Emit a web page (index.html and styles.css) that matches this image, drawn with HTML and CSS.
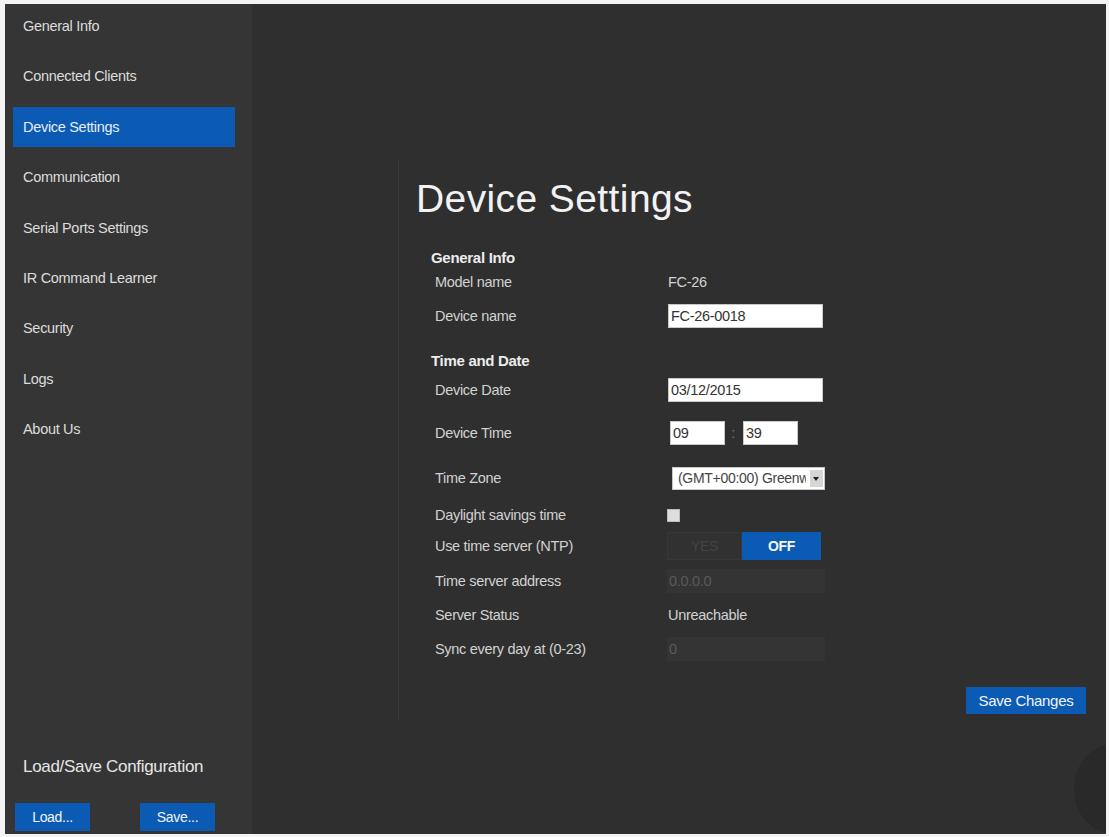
FILE: index.html
```html
<!DOCTYPE html>
<html lang="en">
<head>
    <meta charset="UTF-8">
    <title>Device Settings</title>
    <link rel="stylesheet" href="styles.css">
</head>
<body>
    <div class="app">
        <aside class="sidebar">
            <ul class="nav">
                <li>General Info</li>
                <li>Connected Clients</li>
                <li class="active">Device Settings</li>
                <li>Communication</li>
                <li>Serial Ports Settings</li>
                <li>IR Command Learner</li>
                <li>Security</li>
                <li>Logs</li>
                <li>About Us</li>
            </ul>
            <div class="config">
                <h3>Load/Save Configuration</h3>
                <div class="config-buttons">
                    <button class="btn btn-small">Load...</button>
                    <button class="btn btn-small">Save...</button>
                </div>
            </div>
        </aside>

        <main class="main">
            <section class="panel">
                <h1>Device Settings</h1>

                <div class="form">
                    <div class="row section">General Info</div>
                    <div class="row gap-1">
                        <span class="label">Model name</span>
                        <span class="value">FC-26</span>
                    </div>
                    <div class="row">
                        <span class="label">Device name</span>
                        <input class="field" type="text" value="FC-26-0018">
                    </div>

                    <div class="row section gap-20">Time and Date</div>
                    <div class="row gap-6">
                        <span class="label">Device Date</span>
                        <input class="field" type="text" value="03/12/2015">
                    </div>
                    <div class="row gap-19">
                        <span class="label">Device Time</span>
                        <input class="field field-time" type="text" value="09">
                        <span class="colon">:</span>
                        <input class="field field-time" type="text" value="39">
                    </div>
                    <div class="row gap-21">
                        <span class="label">Time Zone</span>
                        <span class="select">
                            <select>
                                <option>(GMT+00:00) Greenwich Mean Time</option>
                            </select>
                            <span class="select-arrow"></span>
                        </span>
                    </div>
                    <div class="row gap-13">
                        <span class="label">Daylight savings time</span>
                        <span class="checkbox"></span>
                    </div>
                    <div class="row gap-7">
                        <span class="label">Use time server (NTP)</span>
                        <span class="toggle">
                            <span class="toggle-yes">YES</span>
                            <span class="toggle-off">OFF</span>
                        </span>
                    </div>
                    <div class="row gap-11">
                        <span class="label">Time server address</span>
                        <input class="field field-dark" type="text" value="0.0.0.0" disabled>
                    </div>
                    <div class="row">
                        <span class="label">Server Status</span>
                        <span class="value">Unreachable</span>
                    </div>
                    <div class="row">
                        <span class="label">Sync every day at (0-23)</span>
                        <input class="field field-dark" type="text" value="0" disabled>
                    </div>
                </div>

                <div class="panel-footer">
                    <button class="btn btn-save">Save Changes</button>
                </div>
            </section>
            <div class="blob"></div>
        </main>
    </div>
</body>
</html>
```

FILE: styles.css
```css
body {
    margin: 0;
    background: #f4f4f4;
    font-family: "Liberation Sans", Arial, sans-serif;
}
.app {
    display: flex;
    width: 1101px;
    height: 830px;
    margin: 4px 0 0 5px;
    background: #2f2f2f;
    overflow: hidden;
}

/* sidebar */
.sidebar {
    width: 247px;
    background: #353535;
    display: flex;
    flex-direction: column;
}
.nav {
    list-style: none;
    margin: 0;
    padding: 2px 17px 0 8px;
}
.nav li {
    height: 40px;
    line-height: 40px;
    margin-bottom: 10.4px;
    padding-left: 10px;
    font-size: 14.5px;
    color: #dcdcdc;
    letter-spacing: -0.3px;
}
.nav li.active {
    background: #0b5bb4;
    color: #e4ecf7;
}
.config {
    margin-top: auto;
    padding: 0 10px 3px;
}
.config h3 {
    margin: 0 0 26px 8px;
    font-size: 17px;
    line-height: 20px;
    font-weight: normal;
    color: #e6e6e6;
    letter-spacing: -0.3px;
}
.config-buttons {
    display: flex;
    gap: 50px;
}
.btn {
    background: #0b5bb4;
    color: #f0f4fa;
    border: none;
    font-family: inherit;
    cursor: pointer;
}
.btn-small {
    width: 75px;
    height: 28px;
    font-size: 14px;
    letter-spacing: -0.3px;
}

/* main */
.main {
    flex: 1;
    position: relative;
    padding: 156px 0 0 146px;
}
.panel {
    height: 560px;
    border-left: 1px solid #3a3a3a;
    padding-left: 17px;
    display: flex;
    flex-direction: column;
}
.panel h1 {
    margin: 18px 0 0;
    font-size: 39px;
    line-height: 42px;
    font-weight: normal;
    color: #f2f2f2;
    letter-spacing: 0.4px;
}
.form {
    margin: 15px 0 0 15px;
}
.row {
    display: flex;
    align-items: center;
    height: 24px;
    margin-top: 10px;
    font-size: 14.5px;
    color: #d2d2d2;
    letter-spacing: -0.3px;
}
.row.section {
    font-weight: bold;
    color: #ececec;
    font-size: 15px;
}
.gap-1 { margin-top: 1px; }
.gap-6 { margin-top: 6px; }
.gap-7 { margin-top: 7px; }
.gap-11 { margin-top: 11px; }
.gap-13 { margin-top: 13px; }
.gap-19 { margin-top: 19px; }
.gap-20 { margin-top: 20px; }
.gap-21 { margin-top: 21px; }
.label {
    width: 233px;
    padding-left: 4px;
}
.field {
    box-sizing: border-box;
    width: 155px;
    height: 24px;
    padding: 0 2px;
    border: 1px solid #c8c8c8;
    background: #fff;
    color: #333;
    font-family: inherit;
    font-size: 14.5px;
    letter-spacing: -0.3px;
}
.field-time {
    width: 55px;
    margin-left: 2px;
}
.colon {
    width: 16px;
    text-align: center;
    color: #777;
}
.field-dark {
    width: 158px;
    margin-left: -1px;
    border: none;
    background: #343434;
    color: #5a5a5a;
}
.select {
    position: relative;
    margin-left: 4px;
}
.select select {
    appearance: none;
    box-sizing: border-box;
    width: 153px;
    height: 23px;
    padding: 0 18px 0 5px;
    border: 1px solid #c8c8c8;
    background: #fff;
    color: #444;
    font-family: inherit;
    font-size: 14px;
    letter-spacing: -0.3px;
}
.select-arrow {
    position: absolute;
    right: 2px;
    top: 3px;
    width: 13px;
    height: 17px;
    background: #d6d6d6;
}
.select-arrow::after {
    content: "";
    position: absolute;
    left: 3px;
    top: 7px;
    border-left: 3.5px solid transparent;
    border-right: 3.5px solid transparent;
    border-top: 4px solid #222;
}
.checkbox {
    width: 11px;
    height: 11px;
    background: #dedede;
    border: 1px solid #bbb;
    margin-left: -1px;
}
.toggle {
    display: flex;
    height: 28px;
    margin-left: -1px;
}
.toggle span {
    display: flex;
    align-items: center;
    justify-content: center;
    font-size: 14px;
}
.toggle-yes {
    width: 73px;
    background: #313131;
    border: 1px solid #383838;
    color: #444;
}
.toggle-off {
    width: 79px;
    background: #0b5bb4;
    color: #f4f7fb;
    font-weight: bold;
}
.panel-footer {
    margin-top: auto;
    display: flex;
    justify-content: flex-end;
    padding: 0 20px 6px 0;
}
.btn-save {
    width: 120px;
    height: 27px;
    font-size: 15px;
    letter-spacing: -0.3px;
}
.blob {
    position: absolute;
    right: -48px;
    bottom: 0;
    width: 80px;
    height: 90px;
    border-radius: 50%;
    background: #292929;
}
```
